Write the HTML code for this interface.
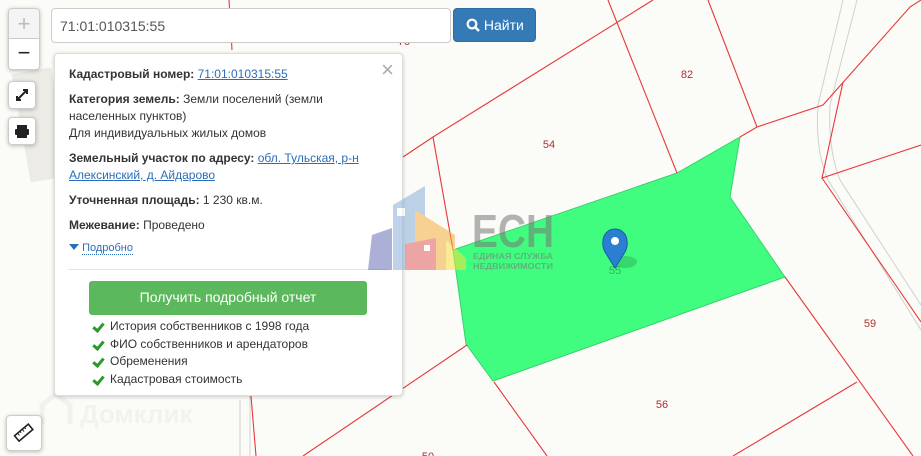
<!DOCTYPE html>
<html><head><meta charset="utf-8"><style>
*{box-sizing:border-box;margin:0;padding:0}
body{width:921px;height:456px;overflow:hidden;background:#fbfbf7;font-family:"Liberation Sans",Arial,sans-serif;position:relative}
.ctl{position:absolute;background:#fff;border:1px solid #ccc;border-radius:4px;box-shadow:0 1px 4px rgba(0,0,0,.25)}
#panel{position:absolute;left:54px;top:53px;width:349px;height:343px;background:#fff;border:1px solid #ddd;border-radius:4px;box-shadow:0 1px 4px rgba(0,0,0,.2);font-size:12px;color:#333;padding:12px 14px}
#panel p{line-height:17px;margin-bottom:8px}
#panel b{font-weight:bold}
a{color:#2a6ebb;text-decoration:underline}
.li{font-size:12px;line-height:17.5px;color:#333;padding-left:56px;position:relative}
.li:before{content:"";position:absolute;left:41px;top:3px;width:4px;height:8px;border:solid #2a9a2a;border-width:0 3px 3px 0;transform:rotate(40deg)}
</style></head><body>
<svg width="921" height="456" style="position:absolute;left:0;top:0">
<rect x="20" y="70" width="40" height="110" fill="#ecebe6" transform="rotate(-10 40 120)"/>
<g fill="none" stroke="#d0d0d0" stroke-width="1">
<path d="M843 0 L818 105 Q815 150 828 180 L921 330"/>
<path d="M857 0 L830 105 Q828 150 840 180 L921 305"/>
<path d="M240 400 L240 456 M250 395 L250 456"/>
</g>
<polygon points="453,250 677,173 740,137 730,197 785,277 493,381 466,344" fill="#40fd80" stroke="#3ad070" stroke-width="1"/>
<g fill="none" stroke="#e8383a" stroke-width="1.1">
<path d="M403,157 L433,137 L653,0"/>
<path d="M433,137 L453,250"/>
<path d="M608,0 L677,173"/>
<path d="M708,0 L757,127"/>
<path d="M740,137 L757,127 L823,105 L910,7 L921,0"/>
<path d="M843,82 L822,178 L921,145"/>
<path d="M822,178 L921,322"/>
<path d="M785,277 L913,456"/>
<path d="M857,382 L733,456"/>
<path d="M494,382 L547,456"/>
<path d="M467,345 L303,456"/>
<path d="M251,396 L256,456"/>
<path d="M229,0 L232,50"/>
</g>
<g fill="#b03030" font-size="11" font-family="Liberation Sans,sans-serif" text-anchor="middle">
<text x="687" y="78">82</text><text x="549" y="148">54</text><text x="662" y="408">56</text><text x="870" y="327">59</text><text x="428" y="460">50</text><text x="404" y="45">70</text>
</g>
<text x="615" y="274" font-size="11" fill="#30b060" text-anchor="middle" font-family="Liberation Sans">55</text>
<g opacity="0.9"><text x="80" y="423" font-size="26" font-weight="bold" fill="#f2f2ee">Домклик</text>
<path d="M42 424 V405 L56 394 L70 405 V424" fill="none" stroke="#f0f0ec" stroke-width="5"/></g>
</svg>
<div class="ctl" style="left:8px;top:8px;width:32px;height:62px">
<div style="height:30px;border-bottom:1px solid #ccc;text-align:center;font-size:22px;line-height:29px;color:#bbb;background:#f4f4f4;border-radius:4px 4px 0 0">+</div>
<div style="text-align:center;font-size:22px;line-height:28px;color:#222">−</div></div>
<div class="ctl" style="left:8px;top:81px;width:28px;height:28px"><svg width="26" height="26"><path d="M8 18 L18 8 M14 8 H18 V12 M8 14 V18 H12" stroke="#222" stroke-width="2" fill="none"/></svg></div>
<div class="ctl" style="left:8px;top:117px;width:28px;height:28px"><svg width="26" height="26"><rect x="8" y="7" width="10" height="4" fill="#222"/><rect x="6" y="11" width="14" height="6" rx="1" fill="#222"/><rect x="8" y="16" width="10" height="4" fill="#222"/></svg></div>
<div class="ctl" style="left:6px;top:415px;width:36px;height:36px"><svg width="34" height="34"><g transform="rotate(-40 17 17)"><rect x="8" y="13" width="18" height="7" fill="none" stroke="#222" stroke-width="1.6"/><path d="M12 13v3M15 13v2M18 13v3M21 13v2" stroke="#222"/></g></svg></div>
<div style="position:absolute;left:51px;top:8px;width:400px;height:35px;background:#fff;border:1px solid #ccc;border-radius:4px;font-size:14px;color:#555;padding:9px 8px">71:01:010315:55</div>
<div style="position:absolute;left:453px;top:8px;width:83px;height:34px;background:#337ab7;border:1px solid #2e6da4;border-radius:4px;color:#fff;font-size:14px;line-height:32px;padding-left:12px"><svg width="14" height="14" style="vertical-align:-2px"><circle cx="6" cy="6" r="4.3" stroke="#fff" stroke-width="2.2" fill="none"/><path d="M9 9L13 13" stroke="#fff" stroke-width="2.5"/></svg> Найти</div>
<div id="panel">
<div style="position:absolute;right:8px;top:3px;font-size:22px;color:#aaa;font-weight:300">×</div>
<p><b>Кадастровый номер:</b> <a>71:01:010315:55</a></p>
<p><b>Категория земель:</b> Земли поселений (земли населенных пунктов)<br>Для индивидуальных жилых домов</p>
<p><b>Земельный участок по адресу:</b> <a>обл. Тульская, р-н Алексинский, д. Айдарово</a></p>
<p><b>Уточненная площадь:</b> 1 230 кв.м.</p>
<p><b>Межевание:</b> Проведено</p>
<div style="font-size:11px;color:#2a6ebb;margin-top:3px"><span style="display:inline-block;border:5px solid transparent;border-top:6px solid #2a6ebb;border-bottom:0;vertical-align:1px"></span> <span style="border-bottom:1px dotted #2a6ebb">Подробно</span></div>
<div style="border-top:1px solid #e5e5e5;margin:15px 0 0 -1px;width:320px"></div>
<div style="margin:11px 0 4px 20px;width:278px;height:34px;background:#5cb85c;border-radius:3px;color:#fff;font-size:14px;text-align:center;line-height:33px">Получить подробный отчет</div>
</div>
<div style="position:absolute;left:54px;top:318px">
<div class="li">История собственников с 1998 года</div>
<div class="li">ФИО собственников и арендаторов</div>
<div class="li">Обременения</div>
<div class="li">Кадастровая стоимость</div>
</div>
<svg width="921" height="456" style="position:absolute;left:0;top:0;pointer-events:none">
<g opacity="0.55">
<polygon points="368,270 372,235 392,228 392,270" fill="#6870b8"/>
<polygon points="393,270 393,205 425,186 425,270" fill="#8ab0d8"/>
<polygon points="415,270 415,210 455,235 455,270" fill="#f4b040"/>
<polygon points="405,270 405,244 436,238 436,270" fill="#e06060"/>
<polygon points="446,270 446,240 466,258 466,270" fill="#f8e040"/>
<rect x="397" y="208" width="8" height="8" fill="#fff"/>
<rect x="424" y="245" width="6" height="6" fill="#fff"/>
<text x="472" y="247" font-size="46" font-weight="bold" fill="#777" textLength="82" lengthAdjust="spacingAndGlyphs">ЕСН</text>
<text x="473" y="259" font-size="8" font-weight="bold" fill="#777" textLength="80" lengthAdjust="spacingAndGlyphs">ЕДИНАЯ СЛУЖБА</text>
<text x="473" y="269" font-size="8" font-weight="bold" fill="#777" textLength="80" lengthAdjust="spacingAndGlyphs">НЕДВИЖИМОСТИ</text>
</g>
<ellipse cx="625" cy="262" rx="12" ry="6" fill="rgba(0,0,0,.15)"/>
<path d="M615 268 L605 252 Q602 246 603 241 A12 12 0 0 1 627 241 Q628 246 625 252 Z" fill="#2b7fd0" stroke="#1a5fa5"/>
<circle cx="615" cy="241" r="4" fill="#fff"/>
</svg>
</body></html>
